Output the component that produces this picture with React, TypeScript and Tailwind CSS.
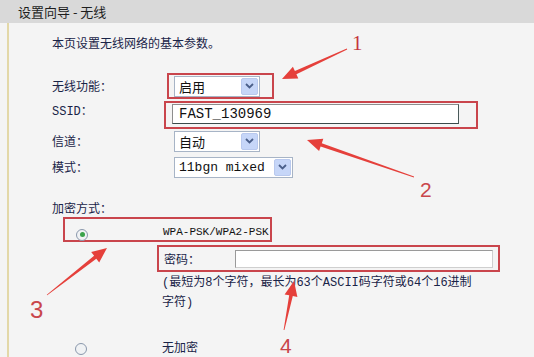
import React from "react";

const CJK = { fontFamily: '"Noto Sans CJK SC", "Liberation Sans", sans-serif' };
const MONO = { fontFamily: '"Liberation Mono", "Noto Sans CJK SC", monospace' };

function arrowPts(x1: number, y1: number, x2: number, y2: number) {
  const dx = x2 - x1, dy = y2 - y1;
  const L = Math.hypot(dx, dy);
  const ux = dx / L, uy = dy / L;
  const nx = -uy, ny = ux;
  const headLen = 15, headW = 6.5, shaftW = 1.8, tailW = 0.4;
  const kx = x2 - ux * headLen, ky = y2 - uy * headLen;
  const p = (x: number, y: number) => `${x.toFixed(1)},${y.toFixed(1)}`;
  return [
    p(x1 + nx * tailW, y1 + ny * tailW),
    p(kx + nx * shaftW, ky + ny * shaftW),
    p(kx + nx * headW, ky + ny * headW),
    p(x2, y2),
    p(kx - nx * headW, ky - ny * headW),
    p(kx - nx * shaftW, ky - ny * shaftW),
    p(x1 - nx * tailW, y1 - ny * tailW),
  ].join(" ");
}

function Select({ text, w, mono }: { text: string; w: string; mono?: boolean }) {
  return (
    <div className={`flex h-[21px] ${w} items-stretch border border-[#a7b4c6] bg-white`}>
      <div
        className="flex flex-1 items-center pl-[4px] text-[13px] leading-none text-[#111]"
        style={mono ? MONO : CJK}
      >
        {text}
      </div>
      <div className="m-[1px] flex w-[17px] items-center justify-center rounded-[2px] border border-[#b9c9ee] bg-[#c6d6f8]">
        <svg width="9" height="6" viewBox="0 0 9 6">
          <path d="M1 1 L4.5 4.5 L8 1" fill="none" stroke="#4a5f8a" strokeWidth="1.8" />
        </svg>
      </div>
    </div>
  );
}

function Radio({ checked }: { checked?: boolean }) {
  return (
    <div className="flex h-[12px] w-[12px] items-center justify-center rounded-full border border-[#8a98ac] bg-[#f0f2f4]">
      {checked && <div className="h-[5px] w-[5px] rounded-full bg-[#3aa24a]" />}
    </div>
  );
}

export default function App() {
  const labelCls = "text-[12px] leading-[16px] text-[#1a2448]";
  return (
    <div className="relative h-[357px] w-[534px] overflow-hidden bg-[#f4f4f4]" style={CJK}>
      <div className="flex h-[23px] items-center bg-[#d9d9d9] pl-[18px] text-[13px] text-[#1e1e1e]">
        设置向导 - 无线
      </div>
      <div className="ml-[7px] h-[334px] border-l-2 border-[#e3d8a8] pl-[43px] pt-[12px]">
        <div className={labelCls}>本页设置无线网络的基本参数。</div>

        {/* 无线功能 */}
        <div className="mt-[22px] flex h-[26px] items-center">
          <div className={`w-[115px] ${labelCls}`}>无线功能：</div>
          <div className="flex h-[26px] w-[107px] items-center border-2 border-[#c9454c] pl-[5px]">
            <Select text="启用" w="w-[86px]" />
          </div>
        </div>

        {/* SSID */}
        <div className="mt-[2px] flex h-[28px] items-start">
          <div className={`w-[112px] pt-[3px] ${labelCls}`} style={MONO}>
            SSID：
          </div>
          <div className="h-[28px] w-[314px] border-2 border-[#c9454c] pl-[6px] pt-[1px]">
            <div
              className="flex h-[20px] w-[287px] items-center border border-[#8d8d8d] border-b-[#3a4a4a] border-r-[#4a5a5a] bg-white pl-[6px] text-[14px] leading-none text-[#111]"
              style={MONO}
            >
              FAST_130969
            </div>
          </div>
        </div>

        {/* 信道 */}
        <div className="mt-[1px] flex h-[22px] items-center">
          <div className={`w-[122px] ${labelCls}`}>信道：</div>
          <Select text="自动" w="w-[86px]" />
        </div>

        {/* 模式 */}
        <div className="mt-[4px] flex h-[22px] items-center">
          <div className={`w-[122px] ${labelCls}`}>模式：</div>
          <Select text="11bgn mixed" w="w-[119px]" mono />
        </div>

        <div className={`mt-[22px] ${labelCls}`}>加密方式：</div>

        {/* WPA */}
        <div className="ml-[11px] mt-[1px] flex h-[25px] w-[209px] items-center border-2 border-[#c9454c]">
          <div className="ml-[11px] mt-[10px]">
            <Radio checked />
          </div>
          <div className="ml-[75px] mt-[5px] text-[11px] leading-none text-[#111]" style={MONO}>
            WPA-PSK/WPA2-PSK
          </div>
        </div>

        {/* 密码 */}
        <div className="ml-[105px] mt-[3px] flex h-[27px] w-[343px] items-center border-2 border-[#c9454c] pl-[5px]">
          <div className={`w-[71px] ${labelCls}`}>密码：</div>
          <div className="h-[18px] w-[258px] border border-[#9a9a9a] border-b-[#cfcfcf] border-r-[#cfcfcf] bg-white" />
        </div>

        <div className="ml-[110px] mt-[1px] text-[12px] leading-[20px] text-[#1a2448]" style={MONO}>
          <div className="whitespace-nowrap">(最短为8个字符，最长为63个ASCII码字符或64个16进制</div>
          <div>字符)</div>
        </div>

        {/* 无加密 */}
        <div className="mt-[26px] flex h-[16px] items-center">
          <div className="ml-[23px] mt-[3px]">
            <Radio />
          </div>
          <div className={`ml-[75px] ${labelCls}`}>无加密</div>
        </div>
      </div>

      {/* annotation overlay */}
      <svg className="pointer-events-none absolute left-0 top-0" width="534" height="357">
        <polygon points={arrowPts(347, 49, 282, 79)} fill="#e5403b" />
        <polygon points={arrowPts(414, 177, 307, 140)} fill="#e5403b" />
        <polygon points={arrowPts(47, 295, 107, 248)} fill="#e5403b" />
        <polygon points={arrowPts(284, 330, 294, 281)} fill="#e5403b" />
      </svg>
      <div
        className="absolute left-[352px] top-[33px] text-[21px] leading-none text-[#c4353c]"
        style={{ fontFamily: '"Liberation Serif", serif' }}
      >
        1
      </div>
      <div
        className="absolute left-[420px] top-[179px] text-[21px] leading-none text-[#c9464b]"
        style={{ fontFamily: '"Liberation Sans", sans-serif' }}
      >
        2
      </div>
      <div
        className="absolute left-[30px] top-[298px] text-[24px] leading-none text-[#c9464b]"
        style={{ fontFamily: '"Liberation Sans", sans-serif' }}
      >
        3
      </div>
      <div
        className="absolute left-[280px] top-[335px] text-[21px] leading-none text-[#c9464b]"
        style={{ fontFamily: '"Liberation Sans", sans-serif' }}
      >
        4
      </div>
    </div>
  );
}
